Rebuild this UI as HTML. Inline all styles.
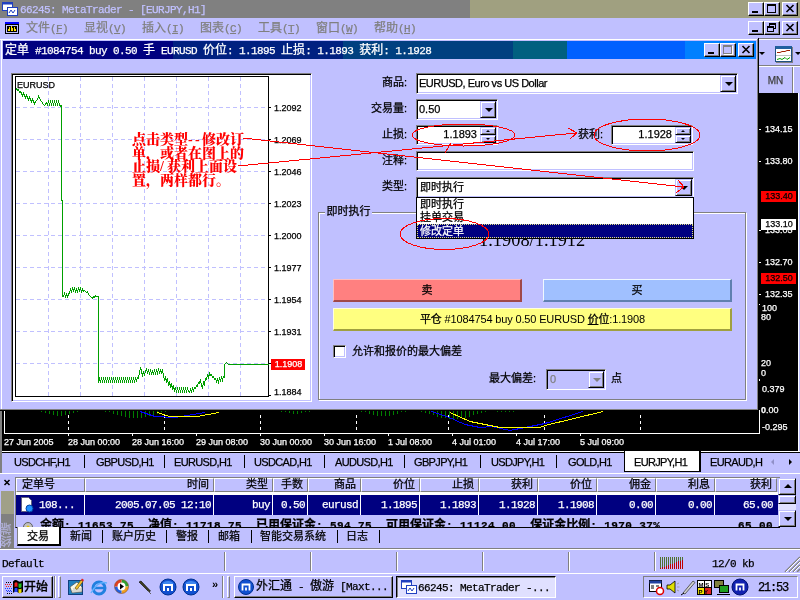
<!DOCTYPE html>
<html lang="zh-CN">
<head>
<meta charset="utf-8">
<title>66245: MetaTrader - [EURJPY,H1]</title>
<style>
html,body{margin:0;padding:0;}
body{width:800px;height:600px;overflow:hidden;background:#c0c0ff;position:relative;
  font-family:"Liberation Sans","Noto Sans CJK SC",sans-serif;font-size:11px;color:#000;line-height:1;}
#root{position:absolute;left:0;top:0;width:800px;height:600px;overflow:hidden;background:#c0c0ff;will-change:transform;}
.a{position:absolute;box-sizing:border-box;white-space:nowrap;}
.cj{font-family:"Liberation Sans","Noto Sans CJK SC",sans-serif;font-size:11px;}
.mono{font-family:"Liberation Mono","Noto Sans CJK SC",monospace;font-size:11px;letter-spacing:-0.6px;}
.tah{font-family:"Liberation Sans","Noto Sans CJK SC",sans-serif;font-size:11px;}
.s9{font-size:9px;}
.tah,.cj,.mono,.tab{-webkit-text-stroke:0.25px currentColor;}
/* 3D edges */
.sunk{border:1px solid;border-color:#808080 #fff #fff #808080;box-shadow:inset 1px 1px 0 #000,inset -1px -1px 0 #c0c0ff;background:#fff;}
.rais{border:1px solid;border-color:#fff #000 #000 #fff;box-shadow:inset -1px -1px 0 #808080;background:#c0c0ff;}
.rais2{border:1px solid;border-color:#c0c0ff #000 #000 #c0c0ff;box-shadow:inset 1px 1px 0 #fff,inset -1px -1px 0 #808080;background:#c0c0ff;}
.wbtn{width:16px;height:14px;}
.lbl{text-align:right;width:60px;height:14px;line-height:14px;}
svg{position:absolute;overflow:visible;}
.rl{left:765px;height:12px;line-height:12px;color:#fff;}
.rb{left:761px;width:35px;height:11px;line-height:11px;text-align:center;padding-left:1px}
.tk{left:759px;width:2px;height:1px;background:#fff}
.z{letter-spacing:0;font-size:12px}
.hd .z{font-size:11px}
.pl{left:274px;height:12px;line-height:12px;}
.btn3{border:1px solid;border-right-width:2px;border-bottom-width:2px;text-align:center;}
.arr{position:absolute;left:4px;top:6px;width:0;height:0;border:4px solid transparent;border-top:4px solid #000;border-bottom:0;}
.up{position:absolute;left:5px;top:2px;width:0;height:0;border:2px solid transparent;border-bottom:2px solid #000;border-top:0;}
.dn{position:absolute;left:5px;top:2px;width:0;height:0;border:2px solid transparent;border-top:2px solid #000;border-bottom:0;}
.tab{top:455px;height:14px;line-height:14px;font-size:11px;letter-spacing:-0.65px;}
.tsep{top:455px;width:1px;height:13px;background:#000;}
.hd{top:478px;height:14px;line-height:13px;font-size:11px;text-align:right;padding-right:4px;border:1px solid;border-color:#fff #808080 #808080 #fff;background:#c0c0ff;}
.rc{top:495px;height:20px;line-height:20px;text-align:right;padding-right:2px;color:#fff;border-right:1px solid #fff;}
.btab{top:529px;height:14px;line-height:14px;}
.bsep{top:530px;width:1px;height:13px;background:#000;}
.ssep{top:552px;width:2px;height:19px;border-left:1px solid #808080;border-right:1px solid #fff;}
.grip{top:576px;width:3px;height:22px;border:1px solid;border-color:#fff #808080 #808080 #fff;}
.tl{top:436px;height:12px;line-height:12px;color:#fff;}
</style>
</head>
<body>
<div id="root">

<!-- ===== main window title bar (inactive) ===== -->
<div class="a" style="left:0;top:0;width:800px;height:18px;background:#a0a080;"></div>
<div class="a" style="left:0;top:0;width:470px;height:18px;background:#808080;"></div>
<div class="a mono" style="left:20px;top:3px;height:14px;line-height:14px;color:#c0c0ff;">66245: MetaTrader - [EURJPY,H1]</div>
<!-- app icon -->
<svg class="a" style="left:2px;top:1px" width="16" height="16" viewBox="0 0 16 16">
  <rect x="0.5" y="1.5" width="10" height="8" fill="#fff" stroke="#2040c0"/>
  <rect x="0.5" y="1.5" width="10" height="2" fill="#2040c0"/>
  <rect x="5.5" y="6.5" width="10" height="8" fill="#fff" stroke="#2040c0"/>
  <path d="M7 12 l2 -3 l2 3 l2 -3" fill="none" stroke="#2040c0"/>
</svg>
<!-- main window buttons -->
<div class="a rais wbtn" style="left:748px;top:2px;"><div class="a" style="left:3px;top:8px;width:6px;height:2px;background:#000"></div></div>
<div class="a rais wbtn" style="left:764px;top:2px;"><div class="a" style="left:2px;top:1px;width:9px;height:9px;border:1px solid #000;border-top-width:2px"></div></div>
<div class="a rais wbtn" style="left:782px;top:2px;"><svg style="left:3px;top:2px" width="8" height="7" viewBox="0 0 8 7"><path d="M0.5 0 L7.5 7 M7.5 0 L0.5 7" stroke="#000" stroke-width="1.6" fill="none"/></svg></div>

<!-- ===== menu bar ===== -->
<div class="a" style="left:0;top:18px;width:800px;height:21px;background:#c0c0ff;"></div>
<div class="a" style="left:5px;top:22px;width:14px;height:12px;background:#000;border-top:2px solid #0000ff;box-shadow:inset 0 0 0 1px #000, inset 0 0 0 2px #c0c0ff;">
  <div class="a" style="left:3px;top:5px;width:1px;height:2px;background:#ffe000"></div>
  <div class="a" style="left:4px;top:3px;width:1px;height:4px;background:#ffe000"></div>
  <div class="a" style="left:6px;top:2px;width:1px;height:5px;background:#ffe000"></div>
  <div class="a" style="left:7px;top:4px;width:1px;height:3px;background:#ffe000"></div>
  <div class="a" style="left:9px;top:3px;width:1px;height:4px;background:#ffe000"></div>
  <div class="a" style="left:10px;top:5px;width:1px;height:2px;background:#ffe000"></div>
</div>
<div class="a mono" style="left:26px;top:22px;height:14px;line-height:14px;color:#808080;"><span class="z">文件</span>(<u>F</u>)</div>
<div class="a mono" style="left:84px;top:22px;height:14px;line-height:14px;color:#808080;"><span class="z">显视</span>(<u>V</u>)</div>
<div class="a mono" style="left:142px;top:22px;height:14px;line-height:14px;color:#808080;"><span class="z">插入</span>(<u>I</u>)</div>
<div class="a mono" style="left:200px;top:22px;height:14px;line-height:14px;color:#808080;"><span class="z">图表</span>(<u>C</u>)</div>
<div class="a mono" style="left:258px;top:22px;height:14px;line-height:14px;color:#808080;"><span class="z">工具</span>(<u>T</u>)</div>
<div class="a mono" style="left:316px;top:22px;height:14px;line-height:14px;color:#808080;"><span class="z">窗口</span>(<u>W</u>)</div>
<div class="a mono" style="left:374px;top:22px;height:14px;line-height:14px;color:#808080;"><span class="z">帮助</span>(<u>H</u>)</div>
<!-- MDI buttons -->
<div class="a rais wbtn" style="left:748px;top:21px;"><div class="a" style="left:3px;top:8px;width:6px;height:2px;background:#000"></div></div>
<div class="a rais wbtn" style="left:764px;top:21px;">
  <div class="a" style="left:4px;top:1px;width:7px;height:6px;border:1px solid #000;border-top-width:2px"></div>
  <div class="a" style="left:2px;top:4px;width:7px;height:6px;border:1px solid #000;border-top-width:2px;background:#c0c0ff"></div>
</div>
<div class="a rais wbtn" style="left:782px;top:21px;"><svg style="left:3px;top:2px" width="8" height="7" viewBox="0 0 8 7"><path d="M0.5 0 L7.5 7 M7.5 0 L0.5 7" stroke="#000" stroke-width="1.6" fill="none"/></svg></div>

<!-- ===== right toolbar strip & main chart (behind dialog) ===== -->
<div class="a" style="left:0;top:39px;width:800px;height:412px;background:#000;"></div>
<div class="a" style="left:758px;top:38px;width:42px;height:55px;background:#c0c0ff;border-left:1px solid #000;"></div>
<div class="a" style="left:759px;top:38px;width:41px;height:1px;background:#808080;"></div>
<div class="a" style="left:759px;top:39px;width:41px;height:1px;background:#fff;"></div>
<div class="a" style="left:759px;top:65px;width:41px;height:1px;background:#808080;"></div>
<div class="a" style="left:759px;top:66px;width:41px;height:1px;background:#fff;"></div>
<div class="a" style="left:798px;top:93px;width:2px;height:358px;background:#c0c0ff;border-left:1px solid #fff"></div>
<!-- toolbar icon -->
<div class="a" style="left:759px;top:52px;width:0;height:0;border:3px solid transparent;border-top:3px solid #000;border-bottom:0"></div>
<div class="a" style="left:795px;top:52px;width:0;height:0;border:3px solid transparent;border-top:3px solid #000;border-bottom:0"></div>
<div class="a" style="left:775px;top:46px;width:17px;height:16px;background:#fff;border:1px solid #205080;border-top:3px solid #2060a0;box-shadow:1px 1px 0 #808080">
  <svg style="left:0;top:0" width="15" height="12" viewBox="0 0 15 12"><path d="M1 3.5 h3 l2 -1 h3 l2 -1 h3" stroke="#a02000" fill="none"/><path d="M0 6.500 h15" stroke="#c0c0c0"/><path d="M1 10.5 l3 -1 l2 1 l3 -2 l2 2 l3 -2" stroke="#00a000" fill="none"/></svg>
</div>
<!-- MN button -->
<div class="a tah" style="left:759px;top:67px;width:34px;height:26px;border-right:1px solid #808080;color:#404040;text-align:center;line-height:27px;font-size:10px;">MN</div>
<div class="a" style="left:793px;top:67px;width:1px;height:26px;background:#fff;"></div>
<!-- right price labels -->
<div class="a tah s9 rl" style="top:123px;">134.15</div><div class="a tk" style="top:129px"></div>
<div class="a tah s9 rl" style="top:155px;">133.80</div><div class="a tk" style="top:161px"></div>
<div class="a tah s9 rl" style="top:224px;">133.05</div><div class="a tk" style="top:230px"></div>
<div class="a tah s9 rl" style="top:256px;">132.70</div><div class="a tk" style="top:262px"></div>
<div class="a tah s9 rl" style="top:288px;">132.35</div><div class="a tk" style="top:294px"></div>
<div class="a tah s9 rb" style="top:191px;background:#f00;color:#000;">133.40</div>
<div class="a tah s9 rb" style="top:219px;background:#fff;color:#000;">133.10</div>
<div class="a tah s9 rb" style="top:273px;background:#f00;color:#000;">132.50</div>
<div class="a tah s9 rl" style="top:302px;left:762px;">100</div>
<div class="a tah s9 rl" style="top:311px;left:761px;">80</div>
<div class="a tah s9 rl" style="top:357px;left:761px;">20</div>
<div class="a tah s9 rl" style="top:367px;left:761px;">0</div>
<div class="a tah s9 rl" style="top:383px;left:762px;">0.379</div>
<div class="a tah s9 rl" style="top:404px;left:761px;"><b>0</b>.00</div>
<div class="a tah s9 rl" style="top:421px;left:762px;">-0.295</div>
<div class="a" style="left:759px;top:304px;width:1px;height:1px;background:#fff"></div>
<div class="a" style="left:759px;top:379px;width:1px;height:2px;background:#fff"></div>
<!-- bottom of main chart -->
<div class="a" style="left:4px;top:410px;width:1px;height:24px;background:#fff"></div>
<div class="a" style="left:4px;top:433px;width:756px;height:1px;background:#fff"></div>
<div class="a" style="left:759px;top:410px;width:1px;height:24px;background:#fff"></div>
<svg style="left:0;top:410px" width="760" height="41" viewBox="0 410 760 41" shape-rendering="crispEdges">
  <g stroke="#fff" stroke-dasharray="3,3" fill="none">
    <path d="M68.500 415 V433 M164.500 415 V433 M260.500 415 V433 M356.500 415 V433 M448.500 415 V433 M544.500 415 V433 M640.500 415 V433"/>
  </g>
  <g stroke="#fff" fill="none"><path d="M68.500 433 v3 M132.500 433 v3 M196.500 433 v3 M260.500 433 v3 M324.500 433 v3 M388.500 433 v3 M452.500 433 v3 M516.500 433 v3 M580.500 433 v3"/></g>
  <path stroke="#008000" fill="none" d="M41.5 411v1 M45.5 411v2 M49.5 411v3 M53.5 411v4 M57.5 411v5 M61.5 411v5 M65.5 411v4 M69.5 411v3 M73.5 411v2 M77.5 411v1 M105.5 411v1 M109.5 411v1 M113.5 411v3 M117.5 411v4 M121.5 411v5 M125.5 411v6 M129.5 411v7 M133.5 411v7 M137.5 411v7 M141.5 411v7 M145.5 411v6 M149.5 411v5 M153.5 411v4 M157.5 411v3 M161.5 411v1 M165.5 411v1 M281.5 411v1 M285.5 411v1 M289.5 411v2 M293.5 411v3 M297.5 411v3 M301.5 411v2 M305.5 411v1 M309.5 411v1 M361.5 411v1 M365.5 411v1 M369.5 411v3 M373.5 411v4 M377.5 411v5 M381.5 411v5 M385.5 411v5 M389.5 411v5 M393.5 411v4 M397.5 411v3 M401.5 411v1 M405.5 411v1 M421.5 411v1 M425.5 411v2 M429.5 411v3 M433.5 411v4 M437.5 411v6 M441.5 411v7 M445.5 411v7 M449.5 411v8 M453.5 411v8 M457.5 411v8 M461.5 411v7 M465.5 411v7 M469.5 411v6 M473.5 411v4 M477.5 411v3 M481.5 411v2 M485.5 411v1 M497.5 411v1 M501.5 411v1 M505.5 411v1 M509.5 411v1 M513.5 411v1"/>
  <g fill="none">
    <path d="M140 411.500 L155 416.500 L175 417.500 L187 415.500 L205 412.500" stroke="#0000ff"/>
    <path d="M157 412.500 L170 416.500 L197 416.500 L219 412.500" stroke="#ffff00"/>
    <path d="M431 411.500 L447 416.500 L465 424.500 L480 427.500 L492 426.500 L510 430.500 L520 428.500 L545 423.500 L583 411.500" stroke="#0000ff"/>
    <path d="M450 412.500 L470 421.500 L500 427.500 L540 427.500 L545 425.500 L603 411.500" stroke="#ffff00"/>
  </g>
</svg>
<div class="a tah s9 tl" style="left:4px;">27 Jun 2005</div>
<div class="a tah s9 tl" style="left:68px;">28 Jun 00:00</div>
<div class="a tah s9 tl" style="left:132px;">28 Jun 16:00</div>
<div class="a tah s9 tl" style="left:196px;">29 Jun 08:00</div>
<div class="a tah s9 tl" style="left:260px;">30 Jun 00:00</div>
<div class="a tah s9 tl" style="left:324px;">30 Jun 16:00</div>
<div class="a tah s9 tl" style="left:388px;">1 Jul 08:00</div>
<div class="a tah s9 tl" style="left:452px;">4 Jul 01:00</div>
<div class="a tah s9 tl" style="left:516px;">4 Jul 17:00</div>
<div class="a tah s9 tl" style="left:580px;">5 Jul 09:00</div>
<!--RIGHT-->
<!-- ===== chart tabs bar ===== -->
<div class="a" style="left:0;top:451px;width:800px;height:149px;background:#c0c0ff;"></div>
<div class="a" style="left:0;top:451px;width:800px;height:1px;background:#fff;"></div>
<div class="a" style="left:2px;top:452px;width:798px;height:1px;background:#000;"></div>
<div class="a" style="left:0;top:473px;width:800px;height:1px;background:#fff;"></div>
<div class="a" style="left:0;top:411px;width:2px;height:62px;background:#808080;"></div>
<div class="a tab" style="left:14px;">USDCHF,H1</div><div class="a tsep" style="left:84px"></div>
<div class="a tab" style="left:96px;">GBPUSD,H1</div><div class="a tsep" style="left:164px"></div>
<div class="a tab" style="left:174px;">EURUSD,H1</div><div class="a tsep" style="left:244px"></div>
<div class="a tab" style="left:254px;">USDCAD,H1</div><div class="a tsep" style="left:324px"></div>
<div class="a tab" style="left:335px;">AUDUSD,H1</div><div class="a tsep" style="left:404px"></div>
<div class="a tab" style="left:414px;">GBPJPY,H1</div><div class="a tsep" style="left:480px"></div>
<div class="a tab" style="left:491px;">USDJPY,H1</div><div class="a tsep" style="left:556px"></div>
<div class="a tab" style="left:568px;">GOLD,H1</div>
<div class="a" style="left:624px;top:451px;width:77px;height:21px;background:#fff;border-right:2px solid #000;border-bottom:1px solid #000;border-left:1px solid #000"></div>
<div class="a tab" style="left:634px;">EURJPY,H1</div>
<div class="a tab" style="left:710px;">EURAUD,H</div>
<div class="a" style="left:771px;top:459px;width:0;height:0;border:3px solid transparent;border-right:3px solid #9090c8;border-left:0"></div>
<div class="a" style="left:789px;top:459px;width:0;height:0;border:3px solid transparent;border-left:3px solid #000;border-right:0"></div>

<!-- ===== terminal ===== -->
<div class="a" style="left:1px;top:491px;width:13px;height:23px;background:#a0a088;"></div>
<div class="a" style="left:1px;top:514px;width:13px;height:34px;background:#808080;"></div>
<div class="a cj" style="left:1px;top:521px;width:12px;height:26px;line-height:12px;color:#b0b0d8;writing-mode:vertical-rl;font-size:12px;transform:rotate(180deg);">终端</div>
<svg style="left:4px;top:480px" width="6" height="5" viewBox="0 0 6 5"><path d="M0.500 0 L5.500 5 M5.500 0 L0.500 5" stroke="#000" stroke-width="1.500" fill="none"/></svg>
<!-- header -->
<div class="a" style="left:15px;top:477px;width:765px;height:51px;border-top:1px solid #808080;border-left:1px solid #808080;border-bottom:1px solid #000;"></div>
<div class="a hd mono" style="left:16px;width:69px;text-align:left;padding-left:5px"><span class="z">定单号</span></div>
<div class="a hd mono" style="left:85px;width:129px;"><span class="z">时间</span></div>
<div class="a hd mono" style="left:214px;width:59px;"><span class="z">类型</span></div>
<div class="a hd mono" style="left:273px;width:35px;"><span class="z">手数</span></div>
<div class="a hd mono" style="left:308px;width:53px;"><span class="z">商品</span></div>
<div class="a hd mono" style="left:361px;width:59px;"><span class="z">价位</span></div>
<div class="a hd mono" style="left:420px;width:59px;"><span class="z">止损</span></div>
<div class="a hd mono" style="left:479px;width:59px;"><span class="z">获利</span></div>
<div class="a hd mono" style="left:538px;width:59px;"><span class="z">价位</span></div>
<div class="a hd mono" style="left:597px;width:59px;"><span class="z">佣金</span></div>
<div class="a hd mono" style="left:656px;width:59px;"><span class="z">利息</span></div>
<div class="a hd mono" style="left:715px;width:62px;"><span class="z">获利</span></div>
<!-- selected row -->
<div class="a" style="left:16px;top:492px;width:762px;height:3px;background:#fff;"></div>
<div class="a" style="left:16px;top:495px;width:762px;height:20px;background:#000080;"></div>
<div class="a rc mono" style="left:16px;width:69px;text-align:left;padding-left:23px">108...</div>
<div class="a rc mono" style="left:85px;width:129px;">2005.07.05 12:10</div>
<div class="a rc mono" style="left:214px;width:59px;">buy</div>
<div class="a rc mono" style="left:273px;width:35px;">0.50</div>
<div class="a rc mono" style="left:308px;width:53px;">eurusd</div>
<div class="a rc mono" style="left:361px;width:59px;">1.1895</div>
<div class="a rc mono" style="left:420px;width:59px;">1.1893</div>
<div class="a rc mono" style="left:479px;width:59px;">1.1928</div>
<div class="a rc mono" style="left:538px;width:59px;">1.1908</div>
<div class="a rc mono" style="left:597px;width:59px;">0.00</div>
<div class="a rc mono" style="left:656px;width:59px;">0.00</div>
<div class="a rc mono" style="left:715px;width:63px;border-right:0;padding-right:5px">65.00</div>
<!-- order icon -->
<svg style="left:20px;top:497px" width="14" height="16" viewBox="0 0 14 16"><path d="M1.500 0.500 h7 l3 3 v11 h-10 z" fill="#fff" stroke="#606080"/><circle cx="9.500" cy="11.500" r="3.500" fill="#2090ff" stroke="#0040a0"/></svg>
<!-- summary row (clipped) -->
<div class="a" style="left:16px;top:517px;width:760px;height:10px;overflow:hidden;">
  <div class="a mono" style="left:24px;top:2px;height:14px;line-height:14px;font-weight:bold;letter-spacing:0.400px;word-spacing:0"><span class="z">余额</span>: 11653.75&nbsp; <span class="z">净值</span>: 11718.75&nbsp; <span class="z">已用保证金</span>: 594.75&nbsp; <span class="z">可用保证金</span>: 11124.00&nbsp; <span class="z">保证金比例</span>: 1970.37%</div>
  <div class="a mono" style="left:700px;top:2px;width:57px;text-align:right;height:14px;line-height:14px;font-weight:bold;letter-spacing:0.400px">65.00</div>
  <svg style="left:6px;top:4px" width="12" height="12" viewBox="0 0 12 12"><circle cx="6" cy="6" r="4.500" fill="#c0c0c0" stroke="#606060"/><circle cx="6" cy="6" r="1.500" fill="#e0c000"/></svg>
</div>
<!-- scrollbar -->
<div class="a" style="left:778px;top:478px;width:18px;height:49px;background:#e0e0ff;"></div>
<div class="a rais2" style="left:778px;top:478px;width:18px;height:17px;"><div class="up" style="left:5px;top:5px;border-width:4px;border-bottom-width:4px;border-top:0"></div></div>
<div class="a rais2" style="left:778px;top:495px;width:18px;height:9px;"></div>
<div class="a rais2" style="left:778px;top:510px;width:18px;height:17px;"><div class="arr" style="left:5px;top:6px"></div></div>
<!-- terminal tabs -->
<div class="a" style="left:17px;top:527px;width:44px;height:19px;background:#fff;border-left:1px solid #808080;border-right:2px solid #000;border-bottom:2px solid #000;"></div>
<div class="a cj btab" style="left:27px;">交易</div>
<div class="a cj btab" style="left:70px;">新闻</div><div class="a bsep" style="left:102px"></div>
<div class="a cj btab" style="left:112px;">账户历史</div><div class="a bsep" style="left:166px"></div>
<div class="a cj btab" style="left:176px;">警报</div><div class="a bsep" style="left:208px"></div>
<div class="a cj btab" style="left:218px;">邮箱</div><div class="a bsep" style="left:251px"></div>
<div class="a cj btab" style="left:260px;">智能交易系统</div><div class="a bsep" style="left:337px"></div>
<div class="a cj btab" style="left:346px;">日志</div><div class="a bsep" style="left:379px"></div>

<!-- ===== status bar ===== -->
<div class="a" style="left:0;top:548px;width:800px;height:1px;background:#808080;"></div>
<div class="a" style="left:0;top:549px;width:800px;height:1px;background:#fff;"></div>
<div class="a mono" style="left:2px;top:557px;height:14px;line-height:14px;">Default</div>
<div class="a ssep" style="left:108px"></div><div class="a ssep" style="left:224px"></div><div class="a ssep" style="left:310px"></div>
<div class="a ssep" style="left:396px"></div><div class="a ssep" style="left:482px"></div><div class="a ssep" style="left:568px"></div><div class="a ssep" style="left:654px"></div>
<svg style="left:660px;top:557px" width="24" height="12" viewBox="0 0 24 12" shape-rendering="crispEdges"><g fill="#507030"><rect x="0" y="0" width="1" height="12"/><rect x="2" y="0" width="1" height="12"/><rect x="4" y="0" width="1" height="12"/><rect x="6" y="0" width="1" height="12"/><rect x="8" y="0" width="1" height="12"/><rect x="10" y="0" width="1" height="12"/><rect x="12" y="0" width="1" height="12"/><rect x="14" y="0" width="1" height="12"/><rect x="16" y="0" width="1" height="12"/><rect x="18" y="0" width="1" height="12"/><rect x="20" y="0" width="1" height="12"/><rect x="22" y="0" width="1" height="12"/></g><g fill="#c00000"><rect x="0" y="11" width="1" height="1"/><rect x="2" y="10" width="1" height="2"/><rect x="4" y="10" width="1" height="2"/><rect x="6" y="9" width="1" height="3"/><rect x="8" y="8" width="1" height="4"/><rect x="10" y="7" width="1" height="5"/><rect x="12" y="7" width="1" height="5"/><rect x="14" y="6" width="1" height="6"/><rect x="16" y="5" width="1" height="7"/><rect x="18" y="4" width="1" height="8"/><rect x="20" y="4" width="1" height="8"/><rect x="22" y="3" width="1" height="9"/></g></svg>
<div class="a mono" style="left:712px;top:557px;height:14px;line-height:14px;">12/0 kb</div>
<svg style="left:784px;top:556px" width="16" height="16" viewBox="0 0 16 16"><path d="M1 16 L16 1 M5 16 L16 5 M9 16 L16 9 M13 16 L16 13" stroke="#808080" stroke-width="1.500"/><path d="M2 16 L16 2 M6 16 L16 6 M10 16 L16 10" stroke="#fff" stroke-width="1"/></svg>

<!-- ===== taskbar ===== -->
<div class="a" style="left:0;top:572px;width:800px;height:1px;background:#c0c0ff;"></div>
<div class="a" style="left:0;top:573px;width:800px;height:1px;background:#fff;"></div>
<div class="a rais" style="left:2px;top:576px;width:51px;height:22px;"></div>
<svg style="left:5px;top:579px" width="18" height="16" viewBox="0 0 18 16">
  <path d="M8 2.500 q2.500 -2.500 5 -0.500 q2 1.500 5 -0.500 v11.500 q-3 2 -5 0.500 q-2.500 -2 -5 0.500 z" fill="#000"/>
  <path d="M9.500 4 q1.500 -1.500 3 -0.300 v4.300 q-1.500 -1.200 -3 0.300 z" fill="#f02020"/>
  <path d="M13.500 4.300 q1.500 0.800 3 -0.300 v4.300 q-1.500 1.100 -3 0.300 z" fill="#20c020"/>
  <path d="M9.500 9.500 q1.500 -1.500 3 -0.300 v4 q-1.500 -1.200 -3 0.300 z" fill="#2040ff"/>
  <path d="M13.500 9.800 q1.500 0.800 3 -0.300 v4 q-1.500 1.100 -3 0.300 z" fill="#f0e000"/>
  <path d="M1 3.500 h6 M2 14.500 h5" stroke="#000" stroke-dasharray="1,1"/>
  <path d="M0 5.500 h7 M1 7.500 h6" stroke="#f02020" stroke-dasharray="1,1"/>
  <path d="M0 9.500 h7 M1 11.500 h6 M2 12.500 h5" stroke="#2040ff" stroke-dasharray="1,1"/>
</svg>
<div class="a cj" style="left:24px;top:579px;height:16px;line-height:16px;font-size:12px;font-weight:500;">开始</div>
<div class="a ssep" style="left:54px;top:576px;height:22px"></div>
<div class="a grip" style="left:58px"></div>
<!-- quick launch -->
<svg style="left:66px;top:578px" width="160" height="18" viewBox="0 0 160 18">
  <g><rect x="2.500" y="2.500" width="14" height="14" fill="#2080c0" stroke="#104080"/><path d="M4 9 L11 4 L16 9 L16 14 L6 15 z" fill="#f8f8e8" stroke="#404040" stroke-width="0.600"/><path d="M6 13 h9 M7 11 h8" stroke="#a0a0a0" stroke-width="0.700"/><path d="M9 10 L15 2 l2 1.500 L11 11.500 z" fill="#f0c030" stroke="#604000" stroke-width="0.600"/><path d="M15 2 l2 1.500 l1 -1.500 l-2 -1.500 z" fill="#e02020"/></g>
  <g><circle cx="33" cy="10" r="6" fill="none" stroke="#2080e0" stroke-width="3"/><path d="M27 10 h12" stroke="#2080e0" stroke-width="2.500"/><path d="M25 15 q7 -13 16 -10" stroke="#60b0ff" stroke-width="1.500" fill="none"/></g>
  <g><circle cx="55.500" cy="8.500" r="7" fill="#fff"/><path d="M55.500 1.500 A7 7 0 0 1 62.500 8.500 h-3 a4 4 0 0 0 -4 -4 z" fill="#30a030"/><path d="M62.500 8.500 A7 7 0 0 1 55.500 15.500 v-3 a4 4 0 0 0 4 -4 z" fill="#f0a020"/><path d="M55.500 15.500 A7 7 0 0 1 48.500 8.500 h3 a4 4 0 0 0 4 4 z" fill="#2060e0"/><path d="M48.500 8.500 A7 7 0 0 1 55.500 1.500 v3 a4 4 0 0 0 -4 4 z" fill="#e04020"/><circle cx="55.500" cy="8.500" r="7" fill="none" stroke="#804020" stroke-width="0.600"/><path d="M54 5.500 l4 3 l-4 3 z" fill="#000"/></g>
  <g><path d="M73 4 L83 14 l1.500 -1 L75 3 z" fill="#404020" stroke="#000" stroke-width="0.600"/><path d="M82 13 l3 3" stroke="#606060"/></g>
  <g><circle cx="102" cy="9" r="8" fill="#1050d0" stroke="#003090"/><path d="M96 6 a7 6 0 0 1 12 0 z" fill="#4088f0"/><path d="M98 13 v-6 h8 v6 M102 13 v-3" fill="none" stroke="#fff" stroke-width="2"/></g>
  <g><circle cx="125" cy="9" r="8" fill="#1050d0" stroke="#003090"/><path d="M119 6 a7 6 0 0 1 12 0 z" fill="#4088f0"/><path d="M121 13 v-6 h8 v6 M125 13 v-3" fill="none" stroke="#fff" stroke-width="2"/></g>
</svg>
<div class="a" style="left:212px;top:578px;height:12px;line-height:12px;font-size:11px;font-weight:bold;">»</div>
<div class="a ssep" style="left:222px;top:576px;height:22px"></div>
<div class="a grip" style="left:227px"></div>
<!-- task buttons -->
<div class="a rais" style="left:234px;top:576px;width:159px;height:22px;"></div>
<svg style="left:238px;top:579px" width="16" height="16" viewBox="0 0 16 16"><circle cx="8" cy="8" r="7.500" fill="#1050d0" stroke="#003090"/><path d="M4.500 11.500 v-6 h7 v6 M8 11.500 v-3" fill="none" stroke="#fff" stroke-width="1.800"/></svg>
<div class="a mono" style="left:256px;top:580px;height:14px;line-height:14px;"><span class="z">外汇通</span> - <span class="z">傲游</span> [Maxt...</div>
<div class="a" style="left:396px;top:576px;width:160px;height:22px;border:1px solid;border-color:#000 #fff #fff #000;box-shadow:inset 1px 1px 0 #808080;background:#e0e0ff;"></div>
<svg style="left:401px;top:580px" width="16" height="16" viewBox="0 0 16 16">
  <rect x="0.500" y="0.500" width="10" height="8" fill="#fff" stroke="#2040c0"/><rect x="0.500" y="0.500" width="10" height="2" fill="#2040c0"/>
  <rect x="5.500" y="5.500" width="10" height="8" fill="#fff" stroke="#2040c0"/><path d="M7 11 l2 -3 l2 3 l2 -3" fill="none" stroke="#2040c0"/>
</svg>
<div class="a mono" style="left:418px;top:581px;height:14px;line-height:14px;">66245: MetaTrader -...</div>
<!-- tray -->
<div class="a" style="left:643px;top:576px;width:155px;height:22px;border:1px solid;border-color:#808080 #fff #fff #808080;"></div>
<svg style="left:648px;top:578px" width="104" height="18" viewBox="0 0 104 18">
  <g><rect x="1.500" y="2.500" width="12" height="11" fill="#fff" stroke="#000"/><rect x="1.500" y="2.500" width="12" height="3" fill="#2040a0"/><path d="M3 8 h3 M3 10 h3 M8 8 h3" stroke="#000"/><circle cx="12" cy="13" r="3.500" fill="#fff" stroke="#e00000" stroke-width="1.500"/></g>
  <g><path d="M19 7 h3 l5 -4 v12 l-5 -4 h-3 z" fill="#e0e000" stroke="#000" stroke-width="0.800"/><path d="M29 6 l2 -1 M29 9 h2.500 M29 12 l2 1" stroke="#a0a0a0"/></g>
  <g><path d="M35 15 L45 3 l2 1.500 L37 16 z" fill="#d0d0d0" stroke="#404040" stroke-width="0.800"/><path d="M33 17 l3 -2" stroke="#000"/></g>
  <g><rect x="49" y="2" width="15" height="15" fill="#000"/><rect x="50" y="3" width="6" height="6" fill="#fff"/><rect x="57" y="3" width="6" height="6" fill="#fff"/><rect x="50" y="10" width="6" height="6" fill="#f0e000"/><rect x="57" y="10" width="6" height="6" fill="#e02020"/>
   <text x="50.500" y="8.500" font-family="Liberation Sans, sans-serif" font-size="6" font-weight="bold" fill="#000">M S</text><text x="50.500" y="15.500" font-family="Liberation Sans, sans-serif" font-size="6" font-weight="bold" fill="#000">P Y</text></g>
  <g><rect x="66.500" y="2.500" width="9" height="7" fill="#808040" stroke="#000"/><rect x="71.500" y="7.500" width="9" height="7" fill="#20a020" stroke="#000"/><path d="M69 16.500 h13" stroke="#000"/></g>
  <g><circle cx="92" cy="9" r="8" fill="#1020b0" stroke="#001070"/><path d="M88.500 12.500 v-6 h7 v6 M92 12.500 v-3" fill="none" stroke="#fff" stroke-width="1.800"/></g>
</svg>
<div class="a mono" style="left:758px;top:581px;height:14px;line-height:14px;font-size:12px;letter-spacing:-1.200px">21:53</div>
<!--BOTTOM-->
<!-- ===== order dialog ===== -->
<div class="a" id="dlg" style="left:0;top:39px;width:759px;height:372px;background:#c0c0ff;border-right:1px solid #000;border-bottom:1px solid #000;box-shadow:inset -1px -1px 0 #808080, inset 0 1px 0 #fff;">
  <div class="a" style="left:1px;top:1px;width:1px;height:369px;background:#fff"></div>
</div>
<!-- title gradient -->
<div class="a" style="left:3px;top:41px;width:753px;height:18px;background:linear-gradient(to right,#000080 0,#000080 170px,#002080 170px,#002080 340px,#004080 340px,#004080 510px,#006080 510px,#006080 564px,#0060ff 564px,#0060ff 682px,#0080ff 682px,#0080ff 753px);"></div>
<div class="a mono" style="left:5px;top:44px;height:14px;line-height:14px;color:#fff;"><span class="z">定单</span> #1084754 buy 0.50 <span class="z">手</span> EURUSD <span class="z">价位</span>: 1.1895 <span class="z">止损</span>: 1.1893 <span class="z">获利</span>: 1.1928</div>
<div class="a rais wbtn" style="left:704px;top:43px;width:16px;"><div class="a" style="left:3px;top:8px;width:6px;height:2px;background:#000"></div></div>
<div class="a rais wbtn" style="left:720px;top:43px;width:16px;"><div class="a" style="left:2px;top:1px;width:9px;height:9px;border:1px solid #808080;border-top-width:2px;box-shadow:1px 1px 0 #fff"></div></div>
<div class="a rais wbtn" style="left:738px;top:43px;width:16px;"><svg style="left:3px;top:2px" width="8" height="7" viewBox="0 0 8 7"><path d="M0.5 0 L7.5 7 M7.5 0 L0.5 7" stroke="#000" stroke-width="1.6" fill="none"/></svg></div>

<!-- tick chart panel -->
<div class="a sunk" style="left:11px;top:73px;width:301px;height:329px;"></div>
<svg style="left:0;top:0" width="320" height="410" viewBox="0 0 320 410">
  <g stroke="#c0c0ff" stroke-dasharray="4,3" fill="none" shape-rendering="crispEdges">
    <path d="M48.500 77 V396 M80.500 77 V396 M112.500 77 V396 M144.500 77 V396 M176.500 77 V396 M208.500 77 V396 M240.500 77 V396"/>
    <path d="M16 107.500 H268 M16 139.500 H268 M16 171.500 H268 M16 203.500 H268 M16 235.500 H268 M16 267.500 H268 M16 299.500 H268 M16 331.500 H268 M16 363.500 H268"/>
  </g>
  <rect x="15.500" y="76.500" width="253" height="320" fill="none" stroke="#000" shape-rendering="crispEdges"/>
  <path d="M269 107.500 h2 M269 139.500 h2 M269 171.500 h2 M269 203.500 h2 M269 235.500 h2 M269 267.500 h2 M269 299.500 h2 M269 331.500 h2 M269 363.500 h2 M269 395.500 h2" stroke="#000" shape-rendering="crispEdges"/>
  <polyline fill="none" stroke="#00a000" stroke-width="1" shape-rendering="crispEdges" points="16.5,88.5 17.5,90.5 18.5,89.5 19.5,92.5 20.5,91.5 22.5,95.5 23.5,93.5 25.5,97.5 26.5,95.5 28.5,99.5 29.5,97.5 31.5,101.5 32.5,99.5 34.5,103.5 35.5,101.5 37.5,99.5 38.5,96.5 39.5,98.5 41.5,101.5 43.5,104.5 44.5,105.5 46.5,102.5 47.5,104.5 48.5,101.5 49.5,104.5 50.5,101.5 51.5,104.5 52.5,101.5 53.5,104.5 54.5,101.5 55.5,104.5 56.5,101.5 57.5,104.5 58.5,101.5 59.5,104.5 60.5,106.5 61.5,105.5 61.5,200.5 62.5,200.5 62.5,296.5 63.5,296.5 64.5,293.5 65.5,296.5 66.5,294.5 67.5,296.5 68.5,294.5 69.5,292.5 70.5,289.5 71.5,291.5 72.5,288.5 73.5,290.5 74.5,288.5 75.5,291.5 76.5,289.5 77.5,291.5 78.5,288.5 79.5,290.5 80.5,288.5 81.5,291.5 82.5,289.5 83.5,291.5 84.5,290.5 86.5,292.5 87.5,291.5 88.5,294.5 90.5,296.5 92.5,298.5 93.5,296.5 94.5,297.5 95.5,295.5 96.5,296.5 98.5,296.5 98.5,382.5 99.5,378.5 100.5,381.5 101.5,378.5 102.5,381.5 103.5,378.5 104.5,381.5 105.5,378.5 106.5,381.5 107.5,378.5 108.5,381.5 109.5,378.5 110.5,381.5 111.5,378.5 112.5,381.5 113.5,378.5 114.5,381.5 115.5,378.5 116.5,381.5 117.5,378.5 118.5,381.5 119.5,378.5 120.5,381.5 121.5,378.5 122.5,381.5 123.5,378.5 124.5,381.5 125.5,378.5 126.5,381.5 127.5,378.5 128.5,381.5 129.5,378.5 130.5,381.5 131.5,378.5 132.5,381.5 133.5,378.5 134.5,381.5 135.5,378.5 136.5,380.5 137.5,377.5 138.5,378.5 139.5,372.5 140.5,367.5 141.5,371.5 142.5,375.5 143.5,372.5 144.5,374.5 145.5,371.5 146.5,369.5 147.5,372.5 148.5,370.5 149.5,373.5 150.5,370.5 151.5,373.5 152.5,371.5 153.5,373.5 154.5,370.5 155.5,373.5 156.5,370.5 157.5,373.5 158.5,369.5 159.5,372.5 160.5,370.5 161.5,372.5 162.5,369.5 163.5,376.5 164.5,379.5 165.5,377.5 166.5,381.5 167.5,379.5 168.5,384.5 169.5,382.5 170.5,386.5 171.5,384.5 172.5,388.5 173.5,386.5 174.5,390.5 175.5,388.5 176.5,391.5 177.5,388.5 178.5,391.5 179.5,388.5 180.5,391.5 181.5,388.5 182.5,391.5 183.5,388.5 184.5,391.5 185.5,388.5 186.5,391.5 187.5,388.5 188.5,391.5 189.5,392.5 190.5,389.5 191.5,391.5 192.5,388.5 193.5,390.5 194.5,387.5 195.5,388.5 196.5,385.5 197.5,386.5 198.5,382.5 199.5,383.5 200.5,379.5 201.5,385.5 202.5,387.5 203.5,382.5 204.5,384.5 205.5,378.5 206.5,379.5 207.5,375.5 208.5,377.5 209.5,373.5 210.5,375.5 211.5,374.5 212.5,377.5 213.5,376.5 214.5,379.5 215.5,378.5 216.5,381.5 217.5,379.5 218.5,382.5 219.5,378.5 220.5,380.5 221.5,377.5 222.5,380.5 223.5,376.5 224.5,377.5 224.5,364.5 225.5,363.5 226.5,362.5 227.5,363.5 228.5,364.5 268.5,364.5"/>
</svg>
<div class="a tah s9" style="left:17px;top:79px;height:12px;line-height:12px;">EURUSD</div>
<div class="a tah s9 pl" style="top:102px;">1.2092</div>
<div class="a tah s9 pl" style="top:134px;">1.2069</div>
<div class="a tah s9 pl" style="top:166px;">1.2046</div>
<div class="a tah s9 pl" style="top:198px;">1.2023</div>
<div class="a tah s9 pl" style="top:230px;">1.2000</div>
<div class="a tah s9 pl" style="top:262px;">1.1977</div>
<div class="a tah s9 pl" style="top:294px;">1.1954</div>
<div class="a tah s9 pl" style="top:326px;">1.1931</div>
<div class="a tah s9 pl" style="top:386px;">1.1884</div>
<div class="a tah s9" style="left:271px;top:359px;width:34px;height:11px;line-height:11px;background:#f00;color:#fff;text-align:center;padding-left:1px">1.1908</div>

<!-- form labels -->
<div class="a cj lbl" style="left:347px;top:75px;">商品:</div>
<div class="a cj lbl" style="left:347px;top:101px;">交易量:</div>
<div class="a cj lbl" style="left:347px;top:127px;">止损:</div>
<div class="a cj lbl" style="left:347px;top:153px;">注释:</div>
<div class="a cj lbl" style="left:347px;top:179px;">类型:</div>
<div class="a cj lbl" style="left:543px;top:127px;">获利:</div>

<!-- symbol combo -->
<div class="a sunk" style="left:416px;top:73px;width:322px;height:21px;"></div>
<div class="a tah" style="left:419px;top:77px;height:13px;line-height:13px;letter-spacing:-0.48px;">EURUSD, Euro vs US Dollar</div>
<div class="a rais2" style="left:720px;top:75px;width:16px;height:17px;"><div class="arr"></div></div>
<!-- volume combo -->
<div class="a sunk" style="left:416px;top:99px;width:82px;height:21px;"></div>
<div class="a tah" style="left:419px;top:103px;height:13px;line-height:13px;">0.50</div>
<div class="a rais2" style="left:480px;top:101px;width:16px;height:17px;"><div class="arr"></div></div>
<!-- stop loss spin -->
<div class="a sunk" style="left:416px;top:125px;width:82px;height:20px;"></div>
<div class="a tah" style="left:420px;top:128px;width:57px;height:13px;line-height:13px;text-align:right;">1.1893</div>
<div class="a rais2" style="left:480px;top:127px;width:16px;height:8px;"><div class="up"></div></div>
<div class="a rais2" style="left:480px;top:135px;width:16px;height:8px;"><div class="dn"></div></div>
<!-- take profit spin -->
<div class="a sunk" style="left:611px;top:125px;width:82px;height:20px;"></div>
<div class="a tah" style="left:615px;top:128px;width:57px;height:13px;line-height:13px;text-align:right;">1.1928</div>
<div class="a rais2" style="left:675px;top:127px;width:16px;height:8px;"><div class="up"></div></div>
<div class="a rais2" style="left:675px;top:135px;width:16px;height:8px;"><div class="dn"></div></div>
<!-- comment -->
<div class="a sunk" style="left:416px;top:151px;width:278px;height:20px;"></div>
<!-- type combo -->
<div class="a sunk" style="left:416px;top:177px;width:278px;height:21px;"></div>
<div class="a cj" style="left:420px;top:180px;height:14px;line-height:14px;">即时执行</div>
<div class="a rais2" style="left:675px;top:179px;width:17px;height:17px;"><div class="arr"></div></div>

<!-- group box -->
<div class="a" style="left:318px;top:212px;width:428px;height:188px;border:1px solid #808080;box-shadow:1px 1px 0 #fff, inset 1px 1px 0 #fff;"></div>
<div class="a cj" style="left:325px;top:204px;width:47px;height:15px;line-height:15px;background:#c0c0ff;text-align:center;">即时执行</div>
<div class="a" style="left:479px;top:229px;height:22px;line-height:22px;font-family:'Liberation Serif',serif;font-size:18.4px;">1.1908/1.1912</div>
<div class="a cj btn3" style="left:333px;top:279px;width:189px;height:23px;line-height:21px;background:#ff8080;border-color:#ffc0c0 #a04848 #a04848 #ffc0c0;">卖</div>
<div class="a cj btn3" style="left:543px;top:279px;width:189px;height:23px;line-height:21px;background:#a0c0ff;border-color:#f0f8ff #6080b0 #6080b0 #f0f8ff;">买</div>
<div class="a btn3" style="left:333px;top:308px;width:399px;height:23px;line-height:21px;background:#ffff80;border-color:#ffffe0 #a0a040 #a0a040 #ffffe0;letter-spacing:-0.150px;padding-left:1px;"><span class="cj">平仓</span> #1084754 buy 0.50 EURUSD <span class="cj"><u>价</u>位</span>:1.1908</div>
<div class="a sunk" style="left:333px;top:345px;width:13px;height:13px;"></div>
<div class="a cj" style="left:352px;top:344px;height:14px;line-height:14px;">允许和报价的最大偏差</div>
<div class="a cj" style="left:489px;top:371px;height:14px;line-height:14px;">最大偏差:</div>
<div class="a sunk" style="left:546px;top:369px;width:60px;height:21px;background:#c0c0ff;"></div>
<div class="a tah" style="left:550px;top:373px;height:13px;line-height:13px;color:#808080;">0</div>
<div class="a rais2" style="left:588px;top:371px;width:16px;height:17px;"><div class="arr" style="border-top-color:#808080"></div></div>
<div class="a cj" style="left:611px;top:371px;height:14px;line-height:14px;">点</div>

<!-- dropdown list of type combo -->
<div class="a" style="left:416px;top:197px;width:278px;height:42px;background:#fff;border:1px solid #000;"></div>
<div class="a cj" style="left:420px;top:198px;height:13px;line-height:13px;">即时执行</div>
<div class="a cj" style="left:420px;top:211px;height:13px;line-height:13px;">挂单交易</div>
<div class="a" style="left:417px;top:224px;width:276px;height:14px;background:#000080;border:1px dotted #e0e080;"></div>
<div class="a cj" style="left:420px;top:224px;height:14px;line-height:14px;color:#fff;">修改定单</div>
<!--DIALOG-->
<!-- ===== red annotations ===== -->
<div class="a" style="left:132px;top:133px;width:118px;font-family:'Liberation Serif','Noto Serif CJK SC',serif;font-size:14px;font-weight:900;color:#f00;line-height:13.500px;white-space:normal;word-break:break-all;">点击类型<span style="letter-spacing:2.340px">--</span>修改订<br>单，或者在图上的<br>止损<span style="letter-spacing:3.100px">/</span>获利上面设<br>置，两样都行。</div>
<svg style="left:0;top:0" width="800" height="600" viewBox="0 0 800 600" fill="none" stroke="#f00" stroke-width="1" shape-rendering="crispEdges">
  <path d="M243 138 L684 187 M678 180 L684 187 L676 193"/>
  <path d="M238 166 L576 133 M568 128 L577 133 L570 139"/>
  <ellipse cx="463.500" cy="135" rx="51.500" ry="11"/>
  <path d="M445 153 L451 143"/>
  <ellipse cx="647" cy="135" rx="53" ry="16"/>
  <ellipse cx="444.500" cy="234" rx="44.500" ry="15.500"/>
</svg>
<!--ANNOT-->

</div>
</body>
</html>
